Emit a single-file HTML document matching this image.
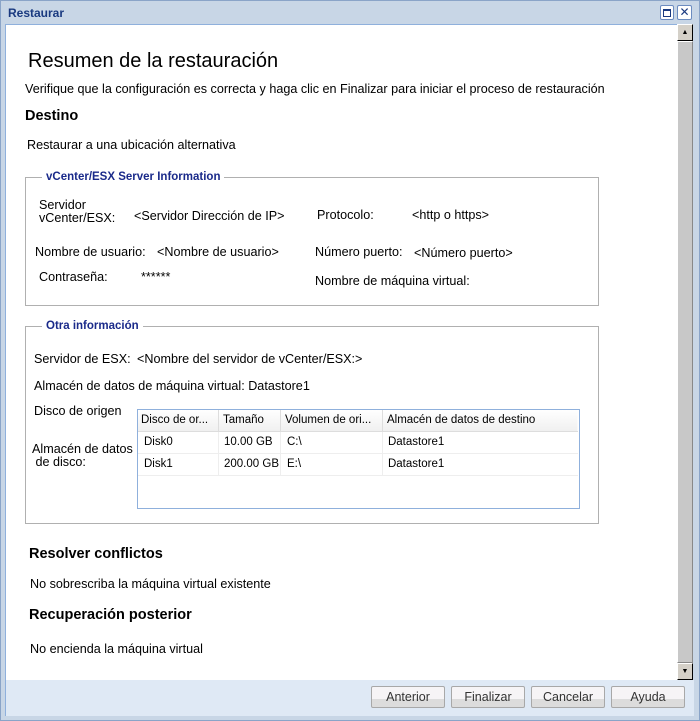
<!DOCTYPE html><html><head><style>
body{margin:0;width:700px;height:721px;overflow:hidden;font-family:"Liberation Sans",sans-serif;font-size:12.6px;color:#000;background:#c8d6e6}
.a{position:absolute;white-space:nowrap}
.win{position:absolute;left:0;top:0;width:698px;height:719px;border:1px solid #8aa4c8;background:#c8d6e6}
.content{position:absolute;left:5px;top:24px;width:672px;height:656px;background:#fff;border:1px solid #8fb0dc;border-right:none;border-bottom:none}
.bottom{position:absolute;left:5px;top:680px;width:688px;height:36px;background:#dfe9f5;border-left:1px solid #8fb0dc}
.btn{position:absolute;top:686px;width:72px;height:20px;border:1px solid #a8a8a8;border-radius:2px;background:linear-gradient(#f6f4f6 60%,#dcdcdc 60%);text-align:center;line-height:21px;color:#333;font-size:12.5px}
fieldset{position:absolute;border:1px solid #b0b0b0;margin:0;padding:0}
legend{color:#1a2a8a;font-weight:bold;font-size:11.5px;padding:0 4px;margin-left:16px}
table{border-collapse:collapse;font-size:11.5px}
</style></head><body>
<div class="win"></div>
<div class="a" style="left:8px;top:6px;color:#1a3a80;font-weight:bold;font-size:12px">Restaurar</div>
<div class="a" style="left:660px;top:5px;width:12px;height:13px;border:1px solid #6c8cc0;background:#fff;border-radius:2px"><div style="margin:3px 2px;height:5px;border:1px solid #1a3a80;border-top-width:2px"></div></div>
<div class="a" style="left:677px;top:5px;width:13px;height:13px;border:1px solid #6c8cc0;background:#fff;border-radius:2px;text-align:center;line-height:13px;color:#1a3a80;font-size:12px">✕</div>
<div class="content"></div>
<div class="a" style="left:677px;top:24px;width:15px;height:656px;background:#f0f0f0"></div>
<div class="a" style="left:677px;top:24px;width:14px;height:15px;background:#d4d0c8;border:1px solid #000;border-top-color:#fff;border-left-color:#fff;font-size:7px;text-align:center;line-height:15px">▲</div>
<div class="a" style="left:677px;top:41px;width:14px;height:620px;background:#c8c8c8;border:1px solid #888;border-top-color:#fff;border-left-color:#fff"></div>
<div class="a" style="left:677px;top:663px;width:14px;height:15px;background:#d4d0c8;border:1px solid #000;border-top-color:#fff;border-left-color:#fff;font-size:7px;text-align:center;line-height:15px">▼</div>
<div class="bottom"></div>
<div class="btn" style="left:371px">Anterior</div>
<div class="btn" style="left:451px">Finalizar</div>
<div class="btn" style="left:531px">Cancelar</div>
<div class="btn" style="left:611px">Ayuda</div>

<div class="a" style="left:28px;top:50px;font-size:20px">Resumen de la restauración</div>
<div class="a" style="left:25px;top:82px">Verifique que la configuración es correcta y haga clic en Finalizar para iniciar el proceso de restauración</div>
<div class="a" style="left:25px;top:108px;font-size:14.5px;font-weight:bold">Destino</div>
<div class="a" style="left:27px;top:138px">Restaurar a una ubicación alternativa</div>

<fieldset style="left:25px;top:171px;width:572px;height:133px"><legend>vCenter/ESX Server Information</legend></fieldset>
<div class="a" style="left:39px;top:199px;line-height:13px">Servidor<br>vCenter/ESX:</div>
<div class="a" style="left:134px;top:209px">&lt;Servidor Dirección de IP&gt;</div>
<div class="a" style="left:317px;top:208px">Protocolo:</div>
<div class="a" style="left:412px;top:208px">&lt;http o https&gt;</div>
<div class="a" style="left:35px;top:245px">Nombre de usuario:</div>
<div class="a" style="left:157px;top:245px">&lt;Nombre de usuario&gt;</div>
<div class="a" style="left:315px;top:245px">Número puerto:</div>
<div class="a" style="left:414px;top:246px">&lt;Número puerto&gt;</div>
<div class="a" style="left:39px;top:270px">Contraseña:</div>
<div class="a" style="left:141px;top:270px">******</div>
<div class="a" style="left:315px;top:274px">Nombre de máquina virtual:</div>

<fieldset style="left:25px;top:320px;width:572px;height:202px"><legend>Otra información</legend></fieldset>
<div class="a" style="left:34px;top:352px">Servidor de ESX:</div>
<div class="a" style="left:137px;top:352px">&lt;Nombre del servidor de vCenter/ESX:&gt;</div>
<div class="a" style="left:34px;top:379px">Almacén de datos de máquina virtual: Datastore1</div>
<div class="a" style="left:34px;top:404px">Disco de origen</div>
<div class="a" style="left:32px;top:443px;line-height:13px">Almacén de datos<br>&nbsp;de disco:</div>
<div class="a" style="left:137px;top:409px;width:441px;height:98px;border:1px solid #8fb0dc;background:#fff">
<table>
<tr style="height:21px;background:linear-gradient(#fff,#f0f0f0)"><td style="width:76px;padding-left:3px;border-right:1px solid #ddd;border-bottom:1px solid #ddd">Disco de or...</td><td style="width:54px;padding-left:4px;border-right:1px solid #ddd;border-bottom:1px solid #ddd">Tamaño</td><td style="width:96px;padding-left:4px;border-right:1px solid #ddd;border-bottom:1px solid #ddd">Volumen de ori...</td><td style="width:190px;padding-left:4px;border-bottom:1px solid #ddd">Almacén de datos de destino</td></tr>
<tr style="height:22px"><td style="padding-left:6px;border-right:1px solid #eee;border-bottom:1px solid #eee">Disk0</td><td style="padding-left:5px;border-right:1px solid #eee;border-bottom:1px solid #eee">10.00 GB</td><td style="padding-left:6px;border-right:1px solid #eee;border-bottom:1px solid #eee">C:\</td><td style="padding-left:5px;border-bottom:1px solid #eee">Datastore1</td></tr>
<tr style="height:22px"><td style="padding-left:6px;border-right:1px solid #eee;border-bottom:1px solid #eee">Disk1</td><td style="padding-left:5px;border-right:1px solid #eee;border-bottom:1px solid #eee">200.00 GB</td><td style="padding-left:6px;border-right:1px solid #eee;border-bottom:1px solid #eee">E:\</td><td style="padding-left:5px;border-bottom:1px solid #eee">Datastore1</td></tr>
</table></div>

<div class="a" style="left:29px;top:546px;font-size:14.5px;font-weight:bold">Resolver conflictos</div>
<div class="a" style="left:30px;top:577px">No sobrescriba la máquina virtual existente</div>
<div class="a" style="left:29px;top:607px;font-size:14.5px;font-weight:bold">Recuperación posterior</div>
<div class="a" style="left:30px;top:642px">No encienda la máquina virtual</div>
</body></html>
